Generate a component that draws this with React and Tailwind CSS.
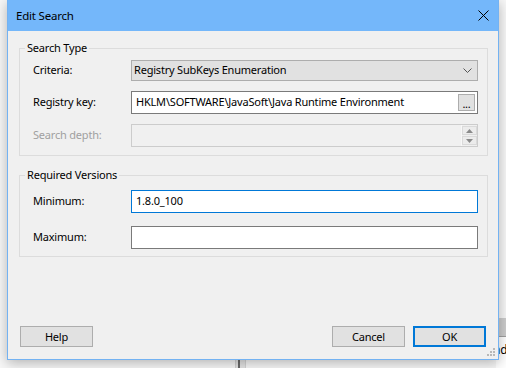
const Row = ({ label, disabled, children, className = '' }) => (
  <div className={`flex items-center ${className}`}>
    <span className={`w-[98px] shrink-0 ${disabled ? 'text-[#a0a0a0]' : 'text-black'}`}>{label}</span>
    {children}
  </div>
);

const TextBox = ({ value, focused }) => (
  <div
    className={`flex h-[23px] w-[347px] items-center border bg-white pl-[4px] ${
      focused ? 'border-[#0078d7]' : 'border-[#7a7a7a]'
    }`}
  >
    {value}
  </div>
);

const Group = ({ title, children, className = '' }) => (
  <fieldset className={`border border-[#dcdcdc] p-0 ${className}`}>
    <legend className="ml-[5px] px-[2px] leading-[16px]">{title}</legend>
    {children}
  </fieldset>
);

const Button = ({ children, primary }) => (
  <button
    className={`flex h-[21px] w-[73px] items-center justify-center bg-[#e1e1e1] leading-none ${
      primary ? 'border-2 border-[#0078d7]' : 'border border-[#adadad]'
    }`}
  >
    {children}
  </button>
);

export default function App() {
  return (
    <div className="relative h-[368px] w-[506px] overflow-hidden bg-[#f7f7f7] font-['Noto_Sans',sans-serif] text-[11px] tracking-[-0.2px] text-black">
      {/* window behind the dialog */}
      <div className="absolute right-0 top-[318px] h-[18px] w-[10px] bg-[#cccccc]" />
      <div className="absolute right-0 top-[336px] h-[32px] w-[10px] border-t border-[#a0a0a0] bg-white" />
      <span className="absolute left-[493px] top-[342px] text-[12px] leading-[16px]">nd</span>
      <div className="absolute left-[235px] top-[360px] h-[8px] w-[11px] border-x border-[#d4d4d4] bg-[#e4e4e4]" />
      <div className="absolute left-[238px] top-[360px] h-[8px] w-[2px] bg-[#6a6a6a]" />

      {/* dialog */}
      <div className="relative z-10 ml-[7px] flex h-[360px] w-[492px] flex-col border border-t-0 border-[#73b2f2] bg-[#f0f0f0] shadow-[0_3px_12px_rgba(0,0,0,0.28)]">
        <div className="flex h-[31px] shrink-0 items-center justify-between bg-[#74b7fa] pl-[8px] pr-[9px]">
          <span className="text-[11.5px]">Edit Search</span>
          <svg width="11" height="11" viewBox="0 0 11 11">
            <path d="M0.5 0.5 L10.5 10.5 M10.5 0.5 L0.5 10.5" stroke="#000" strokeWidth="1" />
          </svg>
        </div>

        <div className="flex flex-1 flex-col px-[11px] pt-[9px]">
          <Group title="Search Type">
            <div className="flex flex-col gap-[10px] pb-[8px] pl-[13px] pr-[9px] pt-[4px]">
              <Row label="Criteria:">
                <div className="flex h-[21px] w-[347px] items-center justify-between border border-[#adadad] bg-[#e1e1e1] pl-[2px] pr-[4px]">
                  <span>Registry SubKeys Enumeration</span>
                  <svg width="9" height="5" viewBox="0 0 9 5" className="mr-[1px]">
                    <polyline points="0.5,0.5 4.5,4.5 8.5,0.5" fill="none" stroke="#555" strokeWidth="1" />
                  </svg>
                </div>
              </Row>
              <Row label="Registry key:">
                <div className="flex h-[23px] w-[347px] items-center justify-between border border-[#7a7a7a] bg-white pl-[4px] pr-[2px]">
                  <span>HKLM\SOFTWARE\JavaSoft\Java Runtime Environment</span>
                  <div className="flex h-[17px] w-[17px] items-end justify-center border border-[#adadad] bg-[#e1e1e1] pb-[1px] leading-[11px]">
                    ...
                  </div>
                </div>
              </Row>
              <Row label="Search depth:" disabled>
                <div className="flex h-[23px] w-[347px] justify-end border border-[#cccccc] bg-[#f0f0f0]">
                  <div className="flex w-[16px] flex-col gap-[1px] border-l border-[#f8f8f8] py-[1px]">
                    <div className="flex h-[10px] items-center justify-center border border-[#dadada] bg-[#ececec]">
                      <svg width="7" height="4" viewBox="0 0 7 4">
                        <polygon points="3.5,0 7,4 0,4" fill="#8a8a8a" />
                      </svg>
                    </div>
                    <div className="flex h-[10px] items-center justify-center border border-[#dadada] bg-[#ececec]">
                      <svg width="7" height="4" viewBox="0 0 7 4">
                        <polygon points="0,0 7,0 3.5,4" fill="#8a8a8a" />
                      </svg>
                    </div>
                  </div>
                </div>
              </Row>
            </div>
          </Group>

          <Group title="Required Versions" className="mt-[11px]">
            <div className="flex flex-col gap-[13px] pb-[7px] pl-[13px] pr-[9px] pt-[7px]">
              <Row label="Minimum:">
                <TextBox value="1.8.0_100" focused />
              </Row>
              <Row label="Maximum:">
                <TextBox value="" />
              </Row>
            </div>
          </Group>

          <div className="mt-auto flex items-center justify-between px-[1px] pb-[12px]">
            <Button>Help</Button>
            <div className="flex gap-[8px]">
              <Button>Cancel</Button>
              <Button primary>OK</Button>
            </div>
          </div>
        </div>

        {/* size grip */}
        <svg width="9" height="9" viewBox="0 0 9 9" className="absolute bottom-[2px] right-[2px]">
          <rect x="6" y="0" width="2" height="2" fill="#b8b8b8" />
          <rect x="3" y="3" width="2" height="2" fill="#b8b8b8" />
          <rect x="6" y="3" width="2" height="2" fill="#b8b8b8" />
          <rect x="0" y="6" width="2" height="2" fill="#b8b8b8" />
          <rect x="3" y="6" width="2" height="2" fill="#b8b8b8" />
          <rect x="6" y="6" width="2" height="2" fill="#b8b8b8" />
        </svg>
      </div>
    </div>
  );
}
